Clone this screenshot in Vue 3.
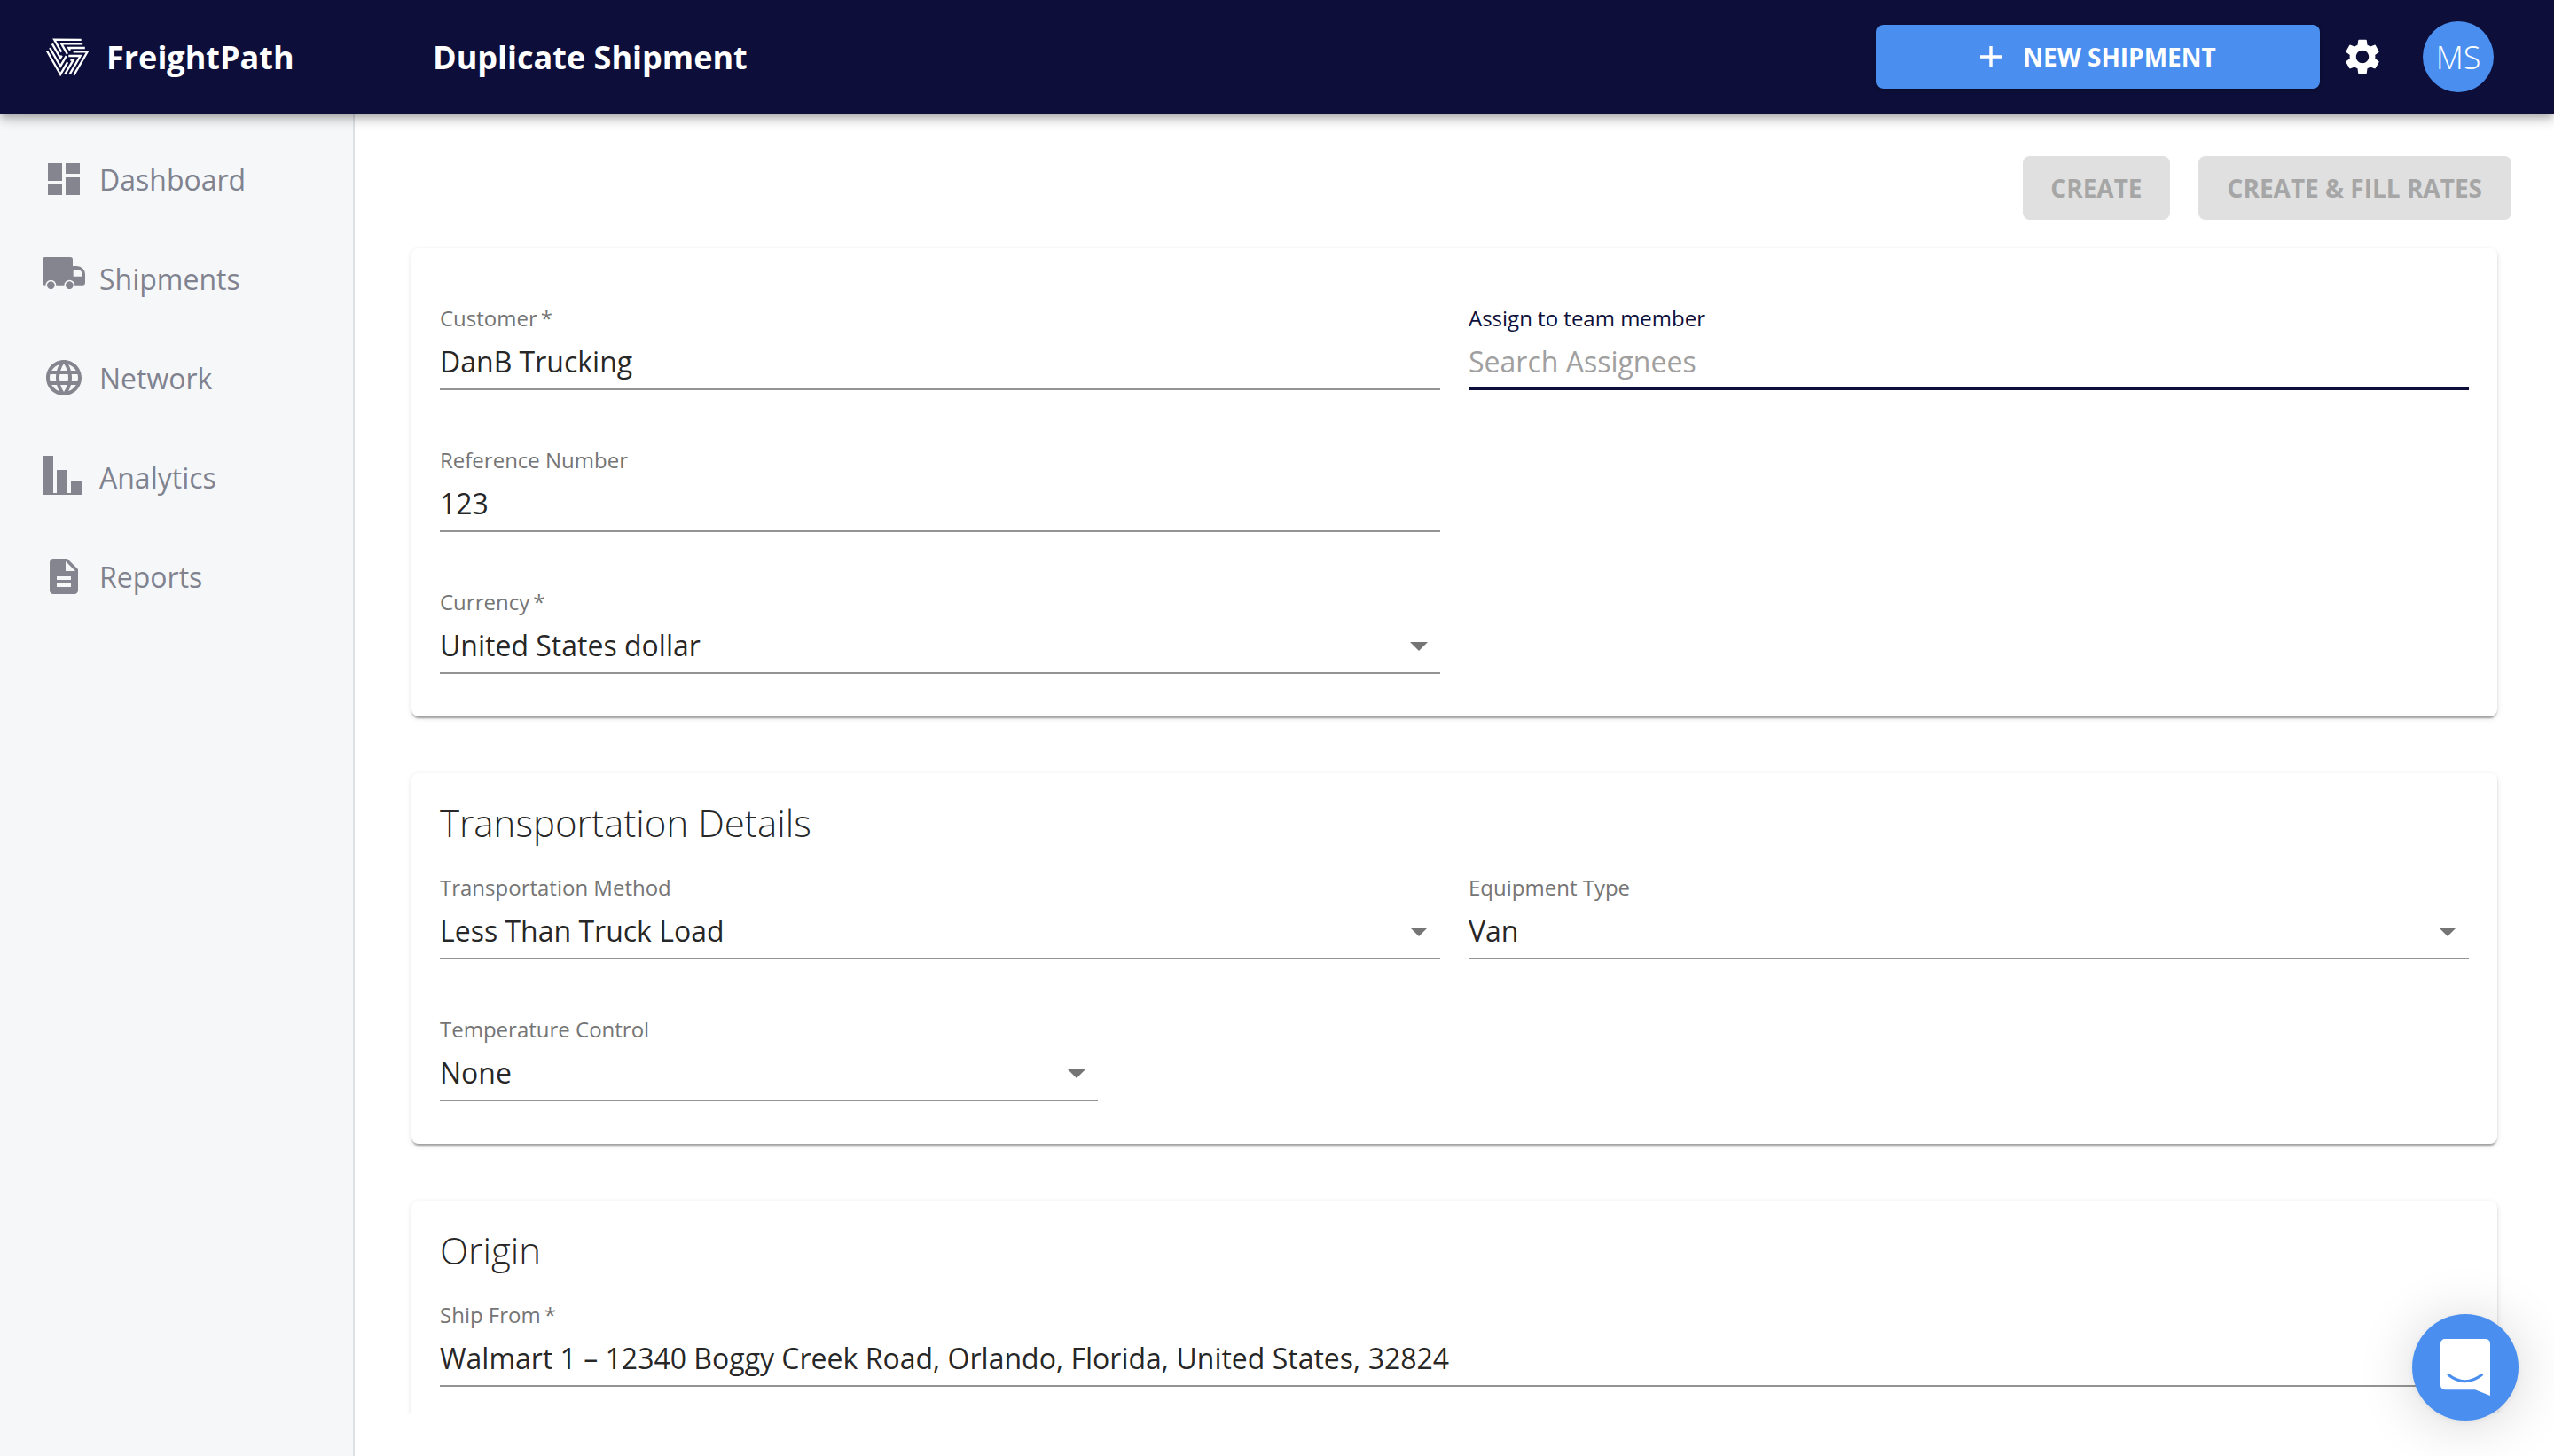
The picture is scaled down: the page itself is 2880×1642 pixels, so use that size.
<script setup>
const navItems = [
  { label: 'Dashboard', viewBox: '0 0 24 24', path: 'M3 13h8V3H3v10zm0 8h8v-6H3v6zm10 0h8V11h-8v10zm0-18v6h8V3h-8z' },
  {
    label: 'Shipments',
    viewBox: '24 30 144 110',
    path: 'M32 30H118a8 8 0 0 1 8 8V60H140a28 28 0 0 1 28 28V118a7 7 0 0 1-7 7H133A18 18 0 0 0 97 125H70A18 18 0 0 0 34 125H31a7 7 0 0 1-7-7V38a8 8 0 0 1 8-8ZM128 72H142a16 16 0 0 1 16 16V95H128ZM52 112a13 13 0 1 0 .01 0ZM115 112a13 13 0 1 0 .01 0Z',
    truck: true,
  },
  {
    label: 'Network',
    viewBox: '0 0 24 24',
    path: 'M11.99 2C6.47 2 2 6.48 2 12s4.47 10 9.99 10C17.52 22 22 17.52 22 12S17.52 2 11.99 2zm6.93 6h-2.95c-.32-1.25-.78-2.45-1.38-3.56 1.84.63 3.37 1.91 4.33 3.56zM12 4.04c.83 1.2 1.48 2.53 1.91 3.96h-3.82c.43-1.43 1.08-2.76 1.91-3.96zM4.26 14C4.1 13.36 4 12.69 4 12s.1-1.36.26-2h3.38c-.08.66-.14 1.32-.14 2 0 .68.06 1.34.14 2H4.26zm.82 2h2.95c.32 1.25.78 2.45 1.38 3.56-1.84-.63-3.37-1.9-4.33-3.56zm2.95-8H5.08c.96-1.66 2.49-2.93 4.33-3.56C8.81 5.55 8.35 6.75 8.03 8zM12 19.96c-.83-1.2-1.48-2.53-1.91-3.96h3.82c-.43 1.43-1.08 2.76-1.91 3.96zM14.34 14H9.66c-.09-.66-.16-1.32-.16-2 0-.68.07-1.35.16-2h4.68c.09.65.16 1.32.16 2 0 .68-.07 1.34-.16 2zm.25 5.56c.6-1.11 1.06-2.31 1.38-3.56h2.95c-.96 1.65-2.49 2.93-4.33 3.56zM16.36 14c.08-.66.14-1.32.14-2 0-.68-.06-1.34-.14-2h3.38c.16.64.26 1.31.26 2s-.1 1.36-.26 2h-3.38z',
  },
  { label: 'Analytics', viewBox: '0 0 48 48', path: 'M0 0h12v42h4V16h12v26h4V28h12v16H0z' },
  {
    label: 'Reports',
    viewBox: '0 0 24 24',
    path: 'M14 2H6c-1.1 0-1.99.9-1.99 2L4 20c0 1.1.89 2 1.99 2H18c1.1 0 2-.9 2-2V8l-6-6zm2 16H8v-2h8v2zm0-4H8v-2h8v2zm-3-5V3.5L18.5 9H13z',
  },
]

const settingsIcon =
  'M19.14 12.94c.04-.3.06-.61.06-.94 0-.32-.02-.64-.07-.94l2.03-1.58c.18-.14.23-.41.12-.61l-1.92-3.32c-.12-.22-.37-.29-.59-.22l-2.39.96c-.5-.38-1.03-.7-1.62-.94l-.36-2.54c-.04-.24-.24-.41-.48-.41h-3.84c-.24 0-.43.17-.47.41l-.36 2.54c-.59.24-1.13.57-1.62.94l-2.39-.96c-.22-.08-.47 0-.59.22L2.74 8.87c-.12.21-.08.47.12.61l2.03 1.58c-.05.3-.09.63-.09.94s.02.64.07.94l-2.03 1.58c-.18.14-.23.41-.12.61l1.92 3.32c.12.22.37.29.59.22l2.39-.96c.5.38 1.03.7 1.62.94l.36 2.54c.05.24.24.41.48.41h3.84c.24 0 .44-.17.47-.41l.36-2.54c.59-.24 1.13-.56 1.62-.94l2.39.96c.22.08.47 0 .59-.22l1.92-3.32c.12-.22.07-.47-.12-.61l-2.01-1.58zM12 15.6c-1.98 0-3.6-1.62-3.6-3.6s1.62-3.6 3.6-3.6 3.6 1.62 3.6 3.6-1.62 3.6-3.6 3.6z'

// one arm of the logo, repeated three times around the centre
const logoArms = [0, 120, 240]
const logoStripes = ['M128 88H176L130 167', 'M112 102H152L116 164', 'M118 116H128L100 164']

const generalRows = [
  [
    { label: 'Customer\u2009*', value: 'DanB Trucking' },
    { label: 'Assign to team member', placeholder: 'Search Assignees', focused: true },
  ],
  [{ label: 'Reference Number', value: '123' }, null],
  [{ label: 'Currency\u2009*', value: 'United States dollar', select: true }, null],
]

const transportRows = [
  [
    { label: 'Transportation Method', value: 'Less Than Truck Load', select: true },
    { label: 'Equipment Type', value: 'Van', select: true },
  ],
]
</script>

<template>
  <div class="app">
    <header class="topbar">
      <div class="brand">
        <svg class="logo" viewBox="33 39 147 130" fill="none" stroke="#fff" stroke-width="7">
          <g v-for="a in logoArms" :key="a" :transform="`rotate(${a} 108 100)`">
            <path v-for="d in logoStripes" :key="d" :d="d" />
          </g>
        </svg>
        <span>FreightPath</span>
      </div>
      <h1 class="page-title">Duplicate Shipment</h1>
      <button class="new-btn">
        <svg class="plus" viewBox="5 5 14 14" fill="#fff"><path d="M19 13h-6v6h-2v-6H5v-2h6V5h2v6h6v2z" /></svg>
        NEW SHIPMENT
      </button>
      <svg class="gear" viewBox="0 0 24 24" fill="#fff"><path :d="settingsIcon" /></svg>
      <div class="avatar">MS</div>
    </header>

    <div class="body">
      <nav class="sidebar">
        <a v-for="item in navItems" :key="item.label" class="nav-item">
          <span class="nav-icon">
            <svg
              :class="{ truck: item.truck }"
              :viewBox="item.viewBox"
              fill="#85858f"
              fill-rule="evenodd"
            >
              <path :d="item.path" />
            </svg>
          </span>
          {{ item.label }}
        </a>
      </nav>

      <main class="content">
        <div class="actions">
          <button class="btn-disabled">CREATE</button>
          <button class="btn-disabled wide">CREATE &amp; FILL RATES</button>
        </div>

        <section class="card">
          <div v-for="(row, i) in generalRows" :key="i" class="row">
            <template v-for="(f, j) in row" :key="j">
              <div v-if="f" class="field" :class="{ focused: f.focused }">
                <label>{{ f.label }}</label>
                <div class="value" :class="{ placeholder: f.placeholder }">
                  {{ f.value || f.placeholder }}
                  <svg v-if="f.select" class="caret" viewBox="0 0 24 24" fill="#757575"><path d="M7 10l5 5 5-5z" /></svg>
                </div>
              </div>
              <div v-else class="field-empty"></div>
            </template>
          </div>
        </section>

        <section class="card titled">
          <h2>Transportation Details</h2>
          <div v-for="(row, i) in transportRows" :key="i" class="row">
            <div v-for="f in row" :key="f.label" class="field">
              <label>{{ f.label }}</label>
              <div class="value">
                {{ f.value }}
                <svg class="caret" viewBox="0 0 24 24" fill="#757575"><path d="M7 10l5 5 5-5z" /></svg>
              </div>
            </div>
          </div>
          <div class="row">
            <div class="field third">
              <label>Temperature Control</label>
              <div class="value">
                None
                <svg class="caret" viewBox="0 0 24 24" fill="#757575"><path d="M7 10l5 5 5-5z" /></svg>
              </div>
            </div>
          </div>
        </section>

        <section class="card titled">
          <h2>Origin</h2>
          <div class="row">
            <div class="field">
              <label>Ship From&thinsp;*</label>
              <div class="value">Walmart 1 – 12340 Boggy Creek Road, Orlando, Florida, United States, 32824</div>
            </div>
          </div>
        </section>
      </main>
    </div>

    <button class="chat">
      <svg viewBox="0 0 56 64" width="56" height="64">
        <path fill="#fff" d="M5 0H51a5 5 0 0 1 5 5V64L39 57.3H5a5 5 0 0 1-5-5V5a5 5 0 0 1 5-5Z" />
        <path fill="none" stroke="#4a8fef" stroke-width="3" stroke-linecap="round" d="M9 40.5Q27.500 55 46.500 40.5" />
      </svg>
    </button>
  </div>
</template>

<style>
html,
body {
  margin: 0;
  overflow: hidden;
  background: #fff;
}
</style>

<style scoped>
.app {
  font-family: 'Open Sans', sans-serif;
  height: 100vh;
  display: flex;
  flex-direction: column;
}

.topbar {
  height: 128px;
  flex: none;
  display: flex;
  align-items: center;
  padding: 0 68px 0 51px;
  background: #0d0f3a;
  color: #fff;
  position: relative;
  z-index: 2;
  box-shadow: 0 4px 8px -2px rgba(0, 0, 0, 0.2), 0 8px 10px 0 rgba(0, 0, 0, 0.14), 0 2px 20px 0 rgba(0, 0, 0, 0.12);
}

.brand {
  width: 437px;
  display: flex;
  align-items: center;
  gap: 20px;
  font-size: 36px;
  font-weight: 700;
}

.logo {
  width: 49px;
  height: 43.33px;
}

.page-title {
  flex: 1;
  margin: 0;
  font-size: 36px;
  font-weight: 700;
}

.new-btn {
  width: 500px;
  height: 72px;
  display: flex;
  align-items: center;
  justify-content: center;
  gap: 24px;
  border: 0;
  border-radius: 8px;
  background: #4a8fef;
  color: #fff;
  font-family: inherit;
  font-size: 28px;
  font-weight: 700;
  box-shadow: 0 2px 4px rgba(0, 0, 0, 0.3);
}

.plus {
  width: 24px;
  height: 24px;
}

.gear {
  width: 48px;
  height: 48px;
  margin: 0 44px 0 24px;
}

.avatar {
  width: 80px;
  height: 80px;
  border-radius: 50%;
  background: #4a8fef;
  display: flex;
  align-items: center;
  justify-content: center;
  font-size: 36px;
  font-weight: 300;
}

.body {
  flex: 1;
  min-height: 0;
  display: flex;
}

.sidebar {
  width: 400px;
  flex: none;
  box-sizing: border-box;
  padding-top: 18px;
  background: #f6f7f9;
  border-right: 2px solid #dfe1e5;
}

.nav-item {
  height: 112px;
  display: flex;
  align-items: center;
  gap: 16px;
  padding-left: 48px;
  font-size: 32px;
  color: #80838f;
}

.nav-icon {
  width: 48px;
  height: 48px;
  display: flex;
  align-items: center;
}

.nav-icon svg {
  width: 48px;
  height: 48px;
}

.nav-icon svg.truck {
  height: 36.67px;
  margin-bottom: 12px;
}

.content {
  flex: 1;
  min-width: 0;
  display: flex;
  flex-direction: column;
  gap: 64px;
  padding: 48px 64px 0;
  margin-bottom: 48px;
  overflow: hidden;
}

.actions {
  display: flex;
  flex: none;
  justify-content: flex-end;
  gap: 32px;
  margin: 0 -16px -32px 0;
}

.btn-disabled {
  height: 72px;
  padding: 0 31px;
  border: 0;
  border-radius: 8px;
  background: #e0e0e0;
  color: #a6a6a6;
  font-family: inherit;
  font-size: 28px;
  font-weight: 700;
}

.btn-disabled.wide {
  padding: 0 33px;
}

.card {
  flex: none;
  padding: 48px 32px;
  background: #fff;
  border-radius: 8px;
  box-shadow: 0 4px 2px -2px rgba(0, 0, 0, 0.2), 0 2px 2px 0 rgba(0, 0, 0, 0.14), 0 2px 6px 0 rgba(0, 0, 0, 0.12);
}

.card.titled {
  padding-top: 28px;
}

.card h2 {
  margin: 0 0 14px;
  font-size: 42px;
  line-height: 56px;
  font-weight: 300;
  color: rgba(0, 0, 0, 0.87);
}

.row {
  display: flex;
  gap: 32px;
}

.row + .row {
  margin-top: 48px;
}

.field,
.field-empty {
  flex: 1;
  min-width: 0;
}

.field {
  box-sizing: border-box;
  height: 112px;
  padding-top: 15px;
  border-bottom: 2px solid #949494;
}

.field.third {
  flex: none;
  width: 742px;
}

.field label {
  display: block;
  font-size: 24px;
  line-height: 32px;
  color: #757575;
}

.value {
  display: flex;
  justify-content: space-between;
  margin-top: 8.5px;
  font-size: 32px;
  line-height: 48px;
  color: rgba(0, 0, 0, 0.87);
}

.value.placeholder {
  color: #a0a0a0;
}

.caret {
  width: 48px;
  height: 48px;
}

.field.focused {
  border-bottom: 4px solid #0d0f3a;
}

.field.focused label {
  color: #0d0f3a;
}

.chat {
  position: fixed;
  right: 40px;
  bottom: 40px;
  width: 120px;
  height: 120px;
  padding: 0;
  border: 0;
  border-radius: 50%;
  background: #4a8fef;
  display: flex;
  align-items: center;
  justify-content: center;
  box-shadow: 0 2px 8px rgba(0, 0, 0, 0.06), 0 4px 64px rgba(0, 0, 0, 0.16);
  z-index: 3;
}
</style>
